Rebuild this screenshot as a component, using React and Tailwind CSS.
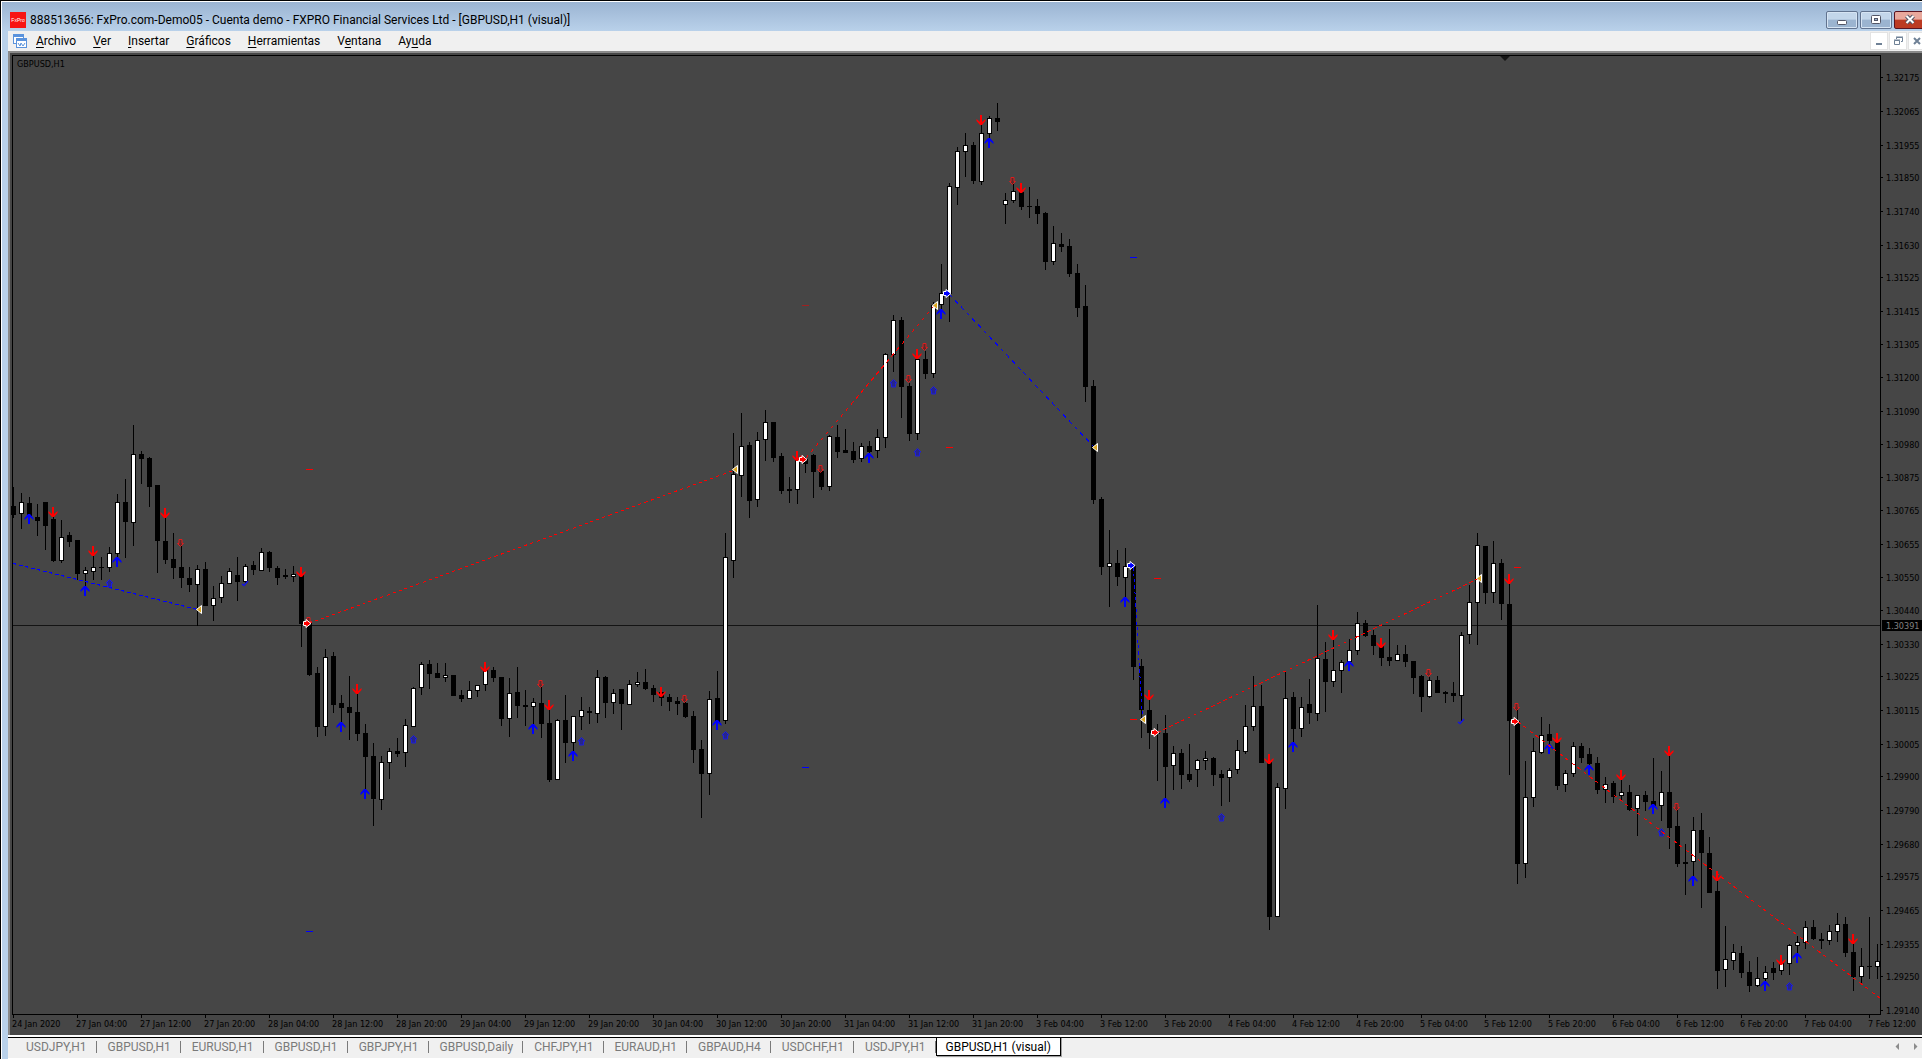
import React from 'react';

const MENU = [
  ['', 'A', 'rchivo'],
  ['', 'V', 'er'],
  ['', 'I', 'nsertar'],
  ['', 'G', 'ráficos'],
  ['', 'H', 'erramientas'],
  ['V', 'e', 'ntana'],
  ['Ay', 'u', 'da'],
];

const TABS = [
  'USDJPY,H1', 'GBPUSD,H1', 'EURUSD,H1', 'GBPUSD,H1', 'GBPJPY,H1', 'GBPUSD,Daily',
  'CHFJPY,H1', 'EURAUD,H1', 'GBPAUD,H4', 'USDCHF,H1', 'USDJPY,H1', 'GBPUSD,H1 (visual)',
];

const DATES = [
  '24 Jan 2020', '27 Jan 04:00', '27 Jan 12:00', '27 Jan 20:00', '28 Jan 04:00', '28 Jan 12:00',
  '28 Jan 20:00', '29 Jan 04:00', '29 Jan 12:00', '29 Jan 20:00', '30 Jan 04:00', '30 Jan 12:00',
  '30 Jan 20:00', '31 Jan 04:00', '31 Jan 12:00', '31 Jan 20:00', '3 Feb 04:00', '3 Feb 12:00',
  '3 Feb 20:00', '4 Feb 04:00', '4 Feb 12:00', '4 Feb 20:00', '5 Feb 04:00', '5 Feb 12:00',
  '5 Feb 20:00', '6 Feb 04:00', '6 Feb 12:00', '6 Feb 20:00', '7 Feb 04:00', '7 Feb 12:00',
];

const PRICES = [
  '1.32175', '1.32065', '1.31955', '1.31850', '1.31740', '1.31630', '1.31525', '1.31415',
  '1.31305', '1.31200', '1.31090', '1.30980', '1.30875', '1.30765', '1.30655', '1.30550',
  '1.30440', '1.30330', '1.30225', '1.30115', '1.30005', '1.29900', '1.29790', '1.29680',
  '1.29575', '1.29465', '1.29355', '1.29250', '1.29140',
];

const priceY = (p) => Math.round(77 + ((1.32175 - p) / 0.03035) * 933);
const barX = (i) => 13 + i * 8;

// high, body top, body bottom, low, bullish
const CANDLES = [
  [487, 506, 515, 518, 0], [493, 502, 514, 529, 1], [497, 503, 516, 518, 0], [504, 517, 521, 536, 0],
  [502, 502, 526, 550, 0], [516, 519, 561, 562, 0], [520, 537, 561, 563, 1], [532, 535, 542, 547, 0],
  [540, 540, 574, 580, 0], [567, 570, 574, 587, 1], [555, 567, 572, 580, 1], [557, 567, 568, 580, 0],
  [547, 553, 568, 572, 1], [494, 502, 554, 558, 1], [479, 502, 522, 558, 0], [425, 454, 523, 546, 1],
  [451, 454, 459, 484, 0], [457, 458, 487, 507, 0], [485, 485, 541, 573, 0], [516, 541, 560, 564, 0],
  [533, 559, 568, 579, 0], [546, 567, 578, 588, 0], [567, 578, 585, 592, 0], [565, 569, 585, 626, 1],
  [562, 569, 606, 606, 0], [586, 598, 606, 621, 1], [576, 583, 598, 603, 1], [568, 571, 584, 584, 1],
  [557, 575, 582, 601, 0], [564, 566, 582, 583, 1], [561, 565, 570, 575, 0], [548, 552, 571, 571, 1],
  [551, 552, 568, 572, 0], [566, 568, 578, 585, 0], [569, 575, 577, 579, 0], [566, 574, 577, 582, 1],
  [575, 575, 624, 647, 0], [622, 623, 675, 676, 0], [667, 673, 727, 737, 0], [649, 657, 727, 736, 1],
  [652, 656, 705, 713, 0], [695, 703, 708, 723, 0], [676, 707, 713, 740, 0], [693, 712, 734, 741, 0],
  [724, 733, 757, 790, 0], [743, 756, 799, 826, 0], [756, 762, 800, 810, 1], [748, 751, 763, 779, 1],
  [738, 751, 754, 757, 0], [719, 725, 753, 767, 1], [687, 688, 727, 727, 1], [662, 664, 688, 695, 1],
  [660, 664, 674, 689, 0], [663, 673, 678, 678, 0], [663, 675, 678, 682, 1], [675, 675, 696, 696, 0],
  [690, 695, 699, 702, 0], [681, 690, 699, 699, 1], [685, 685, 691, 697, 1], [668, 669, 685, 691, 1],
  [667, 670, 678, 682, 0], [677, 677, 719, 726, 0], [678, 693, 719, 737, 1], [667, 692, 706, 718, 0],
  [690, 705, 707, 726, 0], [698, 702, 707, 725, 1], [687, 703, 724, 738, 0], [709, 723, 780, 782, 0],
  [719, 720, 780, 780, 1], [695, 720, 743, 763, 0], [716, 716, 743, 752, 1], [697, 710, 717, 730, 1],
  [707, 711, 713, 724, 0], [670, 677, 714, 723, 1], [676, 677, 703, 718, 0], [689, 693, 703, 714, 1],
  [689, 689, 704, 730, 0], [680, 684, 705, 705, 1], [672, 682, 685, 687, 1], [669, 682, 689, 690, 0],
  [685, 688, 695, 702, 0], [690, 692, 698, 706, 0], [694, 697, 702, 711, 0], [697, 701, 704, 715, 0],
  [702, 703, 717, 718, 0], [711, 716, 750, 763, 0], [740, 749, 774, 818, 0], [691, 699, 774, 795, 1],
  [671, 698, 722, 722, 0], [533, 557, 721, 724, 1], [433, 474, 561, 578, 1], [413, 446, 476, 497, 1],
  [442, 445, 501, 518, 0], [432, 440, 500, 507, 1], [410, 422, 440, 461, 1], [422, 422, 458, 462, 0],
  [453, 456, 491, 494, 0], [477, 489, 491, 503, 0], [458, 459, 490, 504, 1], [457, 459, 464, 473, 0],
  [454, 455, 472, 498, 0], [468, 471, 487, 490, 0], [435, 436, 487, 491, 1], [425, 437, 452, 458, 0],
  [429, 450, 453, 453, 0], [442, 451, 460, 463, 0], [443, 446, 459, 462, 1], [441, 446, 452, 455, 0],
  [429, 437, 451, 458, 1], [353, 354, 438, 448, 1], [315, 320, 355, 372, 1], [317, 320, 387, 418, 0],
  [383, 386, 434, 441, 0], [358, 359, 434, 440, 1], [351, 359, 374, 379, 0], [302, 305, 374, 378, 1],
  [264, 293, 305, 310, 1], [183, 186, 294, 322, 1], [147, 151, 188, 205, 1], [133, 145, 152, 177, 1],
  [142, 145, 181, 184, 0], [125, 133, 182, 185, 1], [116, 118, 134, 139, 1], [103, 118, 122, 131, 0],
  [193, 200, 205, 224, 1], [183, 191, 201, 203, 1], [192, 192, 207, 210, 0], [187, 206, 207, 218, 0],
  [199, 206, 214, 224, 0], [212, 213, 262, 270, 0], [226, 243, 262, 265, 1], [233, 244, 247, 252, 0],
  [239, 246, 274, 277, 0], [264, 273, 308, 317, 0], [285, 306, 387, 402, 0], [380, 386, 500, 504, 0],
  [497, 499, 567, 575, 0], [530, 563, 567, 607, 1], [550, 563, 577, 586, 0], [548, 566, 578, 598, 1],
  [565, 566, 667, 680, 0], [659, 666, 710, 738, 0], [699, 710, 733, 749, 0], [724, 733, 734, 781, 0],
  [715, 733, 767, 799, 0], [746, 753, 766, 790, 1], [749, 753, 775, 789, 0], [744, 774, 780, 782, 0],
  [759, 760, 770, 787, 1], [751, 758, 761, 770, 1], [757, 758, 775, 786, 0], [770, 774, 778, 806, 0],
  [768, 770, 778, 802, 1], [740, 750, 770, 774, 1], [705, 726, 752, 754, 1], [676, 706, 727, 731, 1],
  [685, 706, 763, 763, 0], [762, 762, 917, 930, 0], [783, 787, 917, 917, 1], [671, 698, 789, 809, 1],
  [692, 697, 729, 743, 0], [697, 707, 729, 737, 1], [679, 704, 713, 724, 0], [605, 658, 714, 721, 1],
  [642, 659, 682, 712, 0], [639, 670, 682, 687, 1], [660, 662, 671, 693, 1], [639, 650, 662, 662, 1],
  [612, 623, 651, 655, 1], [620, 623, 636, 637, 0], [630, 635, 646, 655, 0], [646, 646, 658, 666, 0],
  [629, 657, 661, 666, 0], [645, 654, 661, 661, 1], [645, 654, 662, 667, 0], [661, 661, 678, 694, 0],
  [675, 676, 697, 712, 0], [677, 680, 697, 698, 1], [676, 680, 693, 693, 0], [691, 692, 694, 703, 0],
  [682, 693, 696, 702, 0], [632, 635, 696, 721, 1], [585, 602, 635, 644, 1], [533, 545, 603, 645, 1],
  [546, 546, 593, 604, 0], [541, 563, 593, 603, 1], [559, 563, 604, 620, 0], [583, 604, 721, 775, 0],
  [710, 721, 864, 884, 0], [761, 797, 864, 878, 1], [738, 751, 798, 807, 1], [717, 735, 753, 754, 1],
  [724, 734, 741, 745, 0], [741, 742, 786, 790, 0], [770, 773, 785, 792, 1], [742, 746, 774, 777, 1],
  [743, 746, 758, 763, 0], [748, 754, 764, 765, 0], [757, 763, 790, 794, 0], [777, 784, 790, 803, 1],
  [781, 783, 797, 803, 0], [779, 792, 796, 800, 1], [785, 792, 810, 811, 0], [795, 795, 809, 836, 1],
  [791, 795, 802, 811, 0], [758, 801, 806, 806, 0], [771, 792, 806, 821, 1], [755, 792, 828, 849, 0],
  [810, 826, 864, 867, 0], [844, 862, 864, 895, 0], [817, 830, 862, 877, 1], [813, 830, 853, 908, 0],
  [837, 853, 893, 893, 0], [881, 891, 971, 989, 0], [926, 959, 970, 987, 1], [944, 952, 961, 970, 1],
  [946, 953, 973, 978, 0], [961, 972, 986, 992, 0], [957, 978, 986, 987, 1], [966, 972, 979, 982, 1],
  [962, 968, 973, 980, 0], [963, 963, 971, 975, 1], [944, 945, 964, 975, 1], [936, 942, 946, 954, 1],
  [921, 927, 943, 949, 1], [920, 927, 939, 940, 0], [933, 939, 941, 949, 0], [925, 931, 941, 945, 1],
  [913, 924, 932, 942, 1], [917, 924, 953, 957, 0], [943, 952, 977, 991, 0], [948, 966, 977, 983, 1],
  [917, 966, 967, 979, 0], [944, 961, 967, 979, 1],
];

// bar index, top of the glyph
const SELL = [
  [5, 507], [10, 546], [19, 508], [36, 567], [43, 684], [59, 662], [67, 700], [81, 687], [98, 451],
  [113, 349], [121, 115], [126, 183], [142, 690], [157, 754], [165, 630], [171, 638], [187, 574],
  [193, 733], [201, 770], [207, 746], [213, 871], [221, 955], [230, 934],
];
const BUY = [
  [2, 514], [9, 586], [13, 557], [41, 722], [44, 789], [65, 724], [70, 751], [88, 720], [107, 453],
  [116, 309], [122, 138], [139, 597], [144, 798], [160, 742], [167, 661], [192, 744], [197, 765],
  [205, 804], [210, 876], [219, 981], [223, 953],
];
const SELL_HOLLOW = [
  [21, 539], [37, 617], [66, 680], [84, 695], [101, 465], [112, 375], [114, 343], [125, 177],
  [177, 669], [188, 703], [208, 803],
];
const BUY_HOLLOW = [
  [12, 579], [50, 735], [71, 737], [89, 731], [110, 379], [113, 448], [115, 386], [151, 813],
  [206, 828], [222, 982],
];

// x1, y1, x2, y2, color
const TRADES = [
  [13, 563, 197, 609, '#0000ff'],
  [308, 623, 733, 470, '#ff0000'],
  [805, 458, 933, 306, '#ff0000'],
  [949, 294, 1093, 446, '#0000ff'],
  [1133, 567, 1142, 718, '#0000ff'],
  [1157, 732, 1478, 578, '#ff0000'],
  [1517, 721, 1880, 998, '#ff0000'],
];
const ENTRIES = [
  [307, 623, '#ff0000'], [803, 459, '#ff0000'], [947, 293, '#0000ff'],
  [1131, 565, '#0000ff'], [1155, 732, '#ff0000'], [1515, 721, '#ff0000'],
];
const EXITS = [[199, 609], [735, 469], [935, 305], [1095, 447], [1143, 719], [1479, 578]];
const LEVELS = [
  [306, 469, '#ff0000'], [306, 931, '#0000ff'], [802, 305, '#a02020'], [802, 767, '#0000ff'],
  [946, 447, '#ff0000'], [1130, 257, '#0000ff'], [1154, 578, '#ff0000'], [1130, 719, '#ff0000'],
  [1514, 567, '#ff0000'],
];

// three pixels on, three off, counted along the longer axis
function dash(x1, y1, x2, y2) {
  const dx = Math.abs(x2 - x1);
  const dy = Math.abs(y2 - y1);
  return (3 * Math.hypot(dx, dy)) / Math.max(dx, dy);
}

function Candle({ x, data }) {
  const [high, top, bottom, low, up] = data;
  return (
    <g shapeRendering="crispEdges">
      <rect x={x} y={high} width="1" height={low - high} />
      <rect x={x - 2} y={top} width="5" height={bottom - top} />
      {up === 1 && <rect x={x - 1} y={top + 1} width="3" height={bottom - top - 2} fill="#fff" />}
    </g>
  );
}

function Chart() {
  return (
    <svg viewBox="10 53 1912 982" className="block w-full h-auto bg-[#464646]" role="img" aria-label="GBPUSD,H1">
      {/* plot frame */}
      <g shapeRendering="crispEdges">
        <rect x="12" y="55" width="1869" height="1" />
        <rect x="12" y="55" width="1" height="960" />
        <rect x="1880" y="55" width="1" height="960" />
        <rect x="12" y="1014" width="1869" height="1" />
        <rect x="13" y="625" width="1867" height="1" fill="#141414" />
      </g>
      <path d="M1500 56h10l-5 5z" fill="#141414" />

      {CANDLES.map((c, i) => <Candle key={i} x={barX(i)} data={c} />)}

      {SELL_HOLLOW.map(([i, y]) => (
        <path key={i} transform={`translate(${barX(i)} ${y})`} d="M-2 .5V4.5H-3.5L-.5 7.5L2.5 4.5H1V.5Z" fill="#5a2a2a" stroke="#dc1e1e" />
      ))}
      {BUY_HOLLOW.map(([i, y]) => (
        <path key={i} transform={`translate(${barX(i)} ${y})`} d="M-1.5 8V4H-3L.5 .5L4 4H2.5V8Z" fill="#26268c" stroke="#1e1edc" />
      ))}
      {SELL.map(([i, y]) => (
        <path key={i} transform={`translate(${barX(i)} ${y})`} d="M-1 0H1V7L4.5 4V6L1 10H-1L-4.5 6V4L-1 7Z" fill="#ff0000" />
      ))}
      {BUY.map(([i, y]) => (
        <path key={i} transform={`translate(${barX(i)} ${y})`} d="M-1 10H1V3L4.5 6V4L1 0H-1L-4.5 4V6L-1 3Z" fill="#0000ff" />
      ))}
      <path d="M242 584l2 1.5l4 -4.5M1458 722l2 1.5l4 -4.5" fill="none" stroke="#1414e6" strokeWidth="1.5" />

      <g shapeRendering="crispEdges">
        {LEVELS.map(([x, y, color]) => <rect key={`${x}-${y}`} x={x} y={y} width="7" height="1" fill={color} />)}
        {TRADES.map(([x1, y1, x2, y2, color]) => (
          <line key={x1} x1={x1 + 0.5} y1={y1 + 0.5} x2={x2 + 0.5} y2={y2 + 0.5} stroke={color} strokeDasharray={dash(x1, y1, x2, y2)} />
        ))}
      </g>
      {ENTRIES.map(([x, y, color]) => (
        <path key={x} transform={`translate(${x} ${y + 0.5})`} d="M-3.5 -2H-1V-4L4 0L-1 4V2H-3.5Z" fill={color} stroke="#fff" />
      ))}
      {EXITS.map(([x, y]) => (
        <path key={x} transform={`translate(${x} ${y + 0.5})`} d="M-2.5 0L2.5 -4V4Z" fill="#daa520" stroke="#fff" />
      ))}

      <g className="font-['DejaVu_Sans_Condensed','Noto_Sans',sans-serif] text-[9px]" fill="#000">
        <text x="17" y="67">GBPUSD,H1</text>
        {PRICES.map((p) => (
          <g key={p}>
            <rect x="1881" y={priceY(p)} width="2" height="1" />
            <text x="1886" y={priceY(p) + 4}>{p}</text>
          </g>
        ))}
        {DATES.map((d, i) => (
          <g key={d}>
            <rect x={13 + i * 64} y="1015" width="1" height="3" />
            <text x={12 + i * 64} y="1027">{d}</text>
          </g>
        ))}
        <rect x="1882" y="620" width="40" height="11" />
        <text x="1886" y="629" fill="#808080">1.30391</text>
      </g>
    </svg>
  );
}

function CaptionButton({ label, close, children }) {
  return (
    <button
      aria-label={label}
      className={
        close
          ? 'flex h-[18px] w-8 shrink-0 items-center justify-center rounded-[2px] border border-[#5a1420] bg-linear-to-b from-[#e8a89c] from-45% to-[#bc3a22] to-50%'
          : 'flex h-[18px] w-8 shrink-0 items-center justify-center rounded-[2px] border border-[#61738f] bg-linear-to-b from-[#c3d6ea] from-45% to-[#9bb4d0] to-50% shadow-[inset_0_0_0_1px_#d6e4f3]'
      }
    >
      {children}
    </button>
  );
}

function MdiButton({ label, children }) {
  return (
    <button aria-label={label} className="flex h-[18px] w-[18px] shrink-0 items-center justify-center border border-[#e3e3e3] bg-white">
      {children}
    </button>
  );
}

function TitleBar() {
  return (
    <header className="flex h-[30px] items-center overflow-hidden border-t border-white bg-linear-to-b from-[#9bb4d2] to-[#b9d1ea] pl-2 pt-[6px]">
      <svg viewBox="0 0 16 16" className="mr-1 h-4 w-4 shrink-0">
        <rect width="16" height="16" fill="#f81414" />
        <text x="8" y="10" textAnchor="middle" fill="#fff" fontSize="5" fontFamily="Liberation Sans, sans-serif">FxPro</text>
      </svg>
      <h1 className="grow whitespace-nowrap text-[12px] leading-4 text-black">
        888513656: FxPro.com-Demo05 - Cuenta demo - FXPRO Financial Services Ltd - [GBPUSD,H1 (visual)]
      </h1>
      <div className="-mr-1 flex gap-0.5">
        <CaptionButton label="Minimizar">
          <svg viewBox="0 0 12 12" className="h-3 w-3"><rect x="1.5" y="6.5" width="9" height="4" rx="1" fill="#fff" stroke="#535666" /></svg>
        </CaptionButton>
        <CaptionButton label="Maximizar">
          <svg viewBox="0 0 12 12" className="h-3 w-3">
            <rect x="1.5" y="1.5" width="9" height="8" rx="1" fill="#fff" stroke="#535666" />
            <rect x="4.5" y="4.5" width="3" height="2" fill="#9bb4d0" stroke="#535666" />
          </svg>
        </CaptionButton>
        <CaptionButton label="Cerrar" close>
          <svg viewBox="0 0 12 12" className="h-3 w-3" fill="none">
            <path d="M2.5 2L9.5 9M9.5 2L2.5 9" stroke="#535666" strokeWidth="4" />
            <path d="M2.5 2L9.5 9M9.5 2L2.5 9" stroke="#fff" strokeWidth="2" />
          </svg>
        </CaptionButton>
      </div>
    </header>
  );
}

function MenuBar() {
  return (
    <nav className="flex h-5 items-center overflow-hidden bg-[#f0f0f0] pl-1">
      <svg viewBox="0 0 16 16" className="mr-2 h-4 w-4 shrink-0" fill="#fff" stroke="#5b93dc">
        <rect x="1.5" y="1.5" width="10" height="9" />
        <path d="M1 3h11" strokeWidth="2" />
        <rect x="4.5" y="5.5" width="10" height="9" />
        <path d="M4 7h11" strokeWidth="2" />
        <path d="M6 10l2 3l1 -3l2 3l2 -3" fill="none" />
      </svg>
      <div className="flex grow gap-[17px]">
        {MENU.map(([before, key, after]) => (
          <button key={key + after} className="whitespace-nowrap text-[12px] leading-4 text-black">
            {before}<span className="underline underline-offset-2">{key}</span>{after}
          </button>
        ))}
      </div>
      <div className="-mr-1 flex gap-px">
        <MdiButton label="Minimizar gráfico">
          <svg viewBox="0 0 12 12" className="h-3 w-3"><rect x="3" y="8" width="6" height="2" fill="#6f8196" /></svg>
        </MdiButton>
        <MdiButton label="Restaurar gráfico">
          <svg viewBox="0 0 12 12" className="h-3 w-3" fill="none" stroke="#6f8196">
            <path d="M4.5 4V2.5h6v4H9M4 2h7" />
            <path d="M2.5 5.5h5v4h-5zM2 5h6" />
          </svg>
        </MdiButton>
        <MdiButton label="Cerrar gráfico">
          <svg viewBox="0 0 12 12" className="h-3 w-3" stroke="#6f8196" strokeWidth="2">
            <path d="M3 3L9 9M9 3L3 9" />
          </svg>
        </MdiButton>
      </div>
    </nav>
  );
}

function TabBar() {
  return (
    <footer className="flex h-[21px] items-start overflow-hidden border-b border-white bg-[#f0f0f0] pl-[7px]">
      <div className="-mt-px flex grow">
        {TABS.map((tab, i) => {
          const active = i === TABS.length - 1;
          return (
            <button
              key={i}
              className={
                active
                  ? 'h-[19px] whitespace-nowrap border border-black border-t-white bg-white px-[9px] text-[12px] leading-4 text-black shadow-[1px_1px_0_#a0a0a0]'
                  : 'relative h-[19px] whitespace-nowrap pl-[11px] pr-[10px] text-[12px] leading-4 text-[#7a7a7a] after:absolute after:right-0 after:top-1 after:h-3 after:w-px after:bg-[#7a7a7a]'
              }
            >
              {tab}
            </button>
          );
        })}
      </div>
      <svg viewBox="0 0 24 12" className="mr-1 mt-1 h-3 w-6 shrink-0" fill="#8c8c8c">
        <path d="M5 1v7L1.5 4.5zM20 1v7l3.5 -3.5z" />
      </svg>
    </footer>
  );
}

export default function App() {
  return (
    <div className="overflow-hidden border-l border-t border-black bg-[#b9d1ea] font-[Roboto,'Open_Sans',sans-serif]">
      <div className="border-l border-white">
        <TitleBar />
        <div className="ml-[6px]">
          <MenuBar />
          <main className="border-l-2 border-t-2 border-[#8a8a8a]">
            <Chart />
          </main>
          <div className="h-[3px] border-b border-black bg-white" />
          <TabBar />
        </div>
      </div>
    </div>
  );
}
